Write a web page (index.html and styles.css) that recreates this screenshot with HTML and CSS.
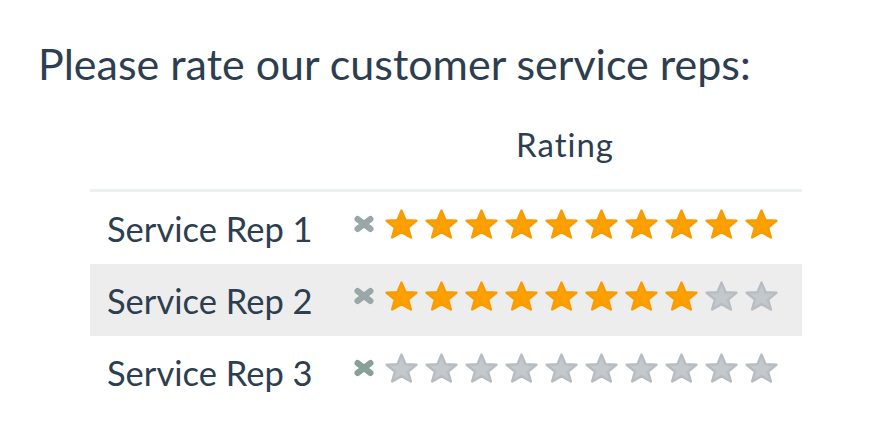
FILE: index.html
```html
<!DOCTYPE html>
<html>
<head>
<meta charset="utf-8">
<link rel="stylesheet" href="styles.css">
</head>
<body>
<div class="page">
  <h1 class="title">Please rate our customer service reps:</h1>
  <div class="table">
    <div class="head">
      <div class="hcell"></div>
      <div class="hcell rating-head">Rating</div>
    </div>
    <div class="row">
      <div class="name">Service Rep 1</div>
      <div class="rating" data-score="10"></div>
    </div>
    <div class="row alt">
      <div class="name">Service Rep 2</div>
      <div class="rating" data-score="8"></div>
    </div>
    <div class="row zero">
      <div class="name">Service Rep 3</div>
      <div class="rating" data-score="0"></div>
    </div>
  </div>
</div>
<script src="script.js"></script>
</body>
</html>
```

FILE: script.js
```js
(function () {
  var NS = 'http://www.w3.org/2000/svg';
  var starPath = 'M16.5 1.6 L20.6 11.2 L31.4 11.82 L23.1 18.5 L25.9 28.5 L16.5 23.1 L7.1 28.5 L9.9 18.5 L1.6 11.82 L12.4 11.2 Z';
  function makeCancel() {
    var s = document.createElementNS(NS, 'svg');
    s.setAttribute('class', 'cancel');
    s.setAttribute('viewBox', '0 0 22 18');
    s.innerHTML = '<path d="M4.5 4 L17.5 14 M17.5 4 L4.5 14" stroke="currentColor" stroke-width="6" stroke-linecap="round" fill="none"/>';
    return s;
  }
  function makeStar(on) {
    var s = document.createElementNS(NS, 'svg');
    s.setAttribute('class', 'star ' + (on ? 'on' : 'off'));
    s.setAttribute('viewBox', '0 0 33 30');
    s.innerHTML = '<path d="' + starPath + '" stroke-width="2.4" stroke-linejoin="round"/>';
    return s;
  }
  var ratings = document.querySelectorAll('.rating');
  for (var i = 0; i < ratings.length; i++) {
    var el = ratings[i];
    var score = parseInt(el.getAttribute('data-score'), 10);
    var wrap = document.createElement('div');
    wrap.className = 'stars';
    wrap.appendChild(makeCancel());
    for (var k = 1; k <= 10; k++) wrap.appendChild(makeStar(k <= score));
    el.appendChild(wrap);
  }
})();
```

FILE: styles.css
```css
html, body {
  margin: 0;
  padding: 0;
  background: #ffffff;
}
body {
  font-family: Lato, "Open Sans", sans-serif;
  color: #2c3e50;
}
.page {
  padding: 38px 0 0 38px;
}
.title {
  margin: 0;
  font-weight: 400;
  font-size: 43px;
  line-height: 52px;
}
.table {
  margin: 35px 0 0 52px;
  width: 712px;
}
.head {
  display: grid;
  grid-template-columns: 238px 474px;
  border-bottom: 3px solid #ecf0f1;
}
.hcell {
  font-size: 33px;
  line-height: 38px;
  padding-bottom: 26px;
}
.rating-head {
  text-align: center;
  letter-spacing: 1px;
}
.row {
  display: grid;
  grid-template-columns: 238px 474px;
  height: 72px;
  align-items: center;
}
.row.alt {
  background: #ededed;
}
.name {
  padding-left: 17px;
  font-size: 34.5px;
  line-height: 42px;
  padding-top: 1px;
}
.rating {
  display: flex;
  justify-content: center;
}
.stars {
  display: flex;
  align-items: center;
  margin-bottom: 9px;
}
.cancel {
  width: 22px;
  height: 18px;
  color: #99a7a8;
  margin-right: 10px;
}
.row.zero .cancel {
  color: #88a09a;
}
.star {
  width: 33px;
  height: 30px;
  margin-right: 7px;
}
.star:last-child {
  margin-right: 0;
}
.star.on path {
  fill: #ff9f00;
  stroke: #f89c04;
}
.star.off path {
  fill: #c2c8cc;
  stroke: #b7bdc2;
}
```
